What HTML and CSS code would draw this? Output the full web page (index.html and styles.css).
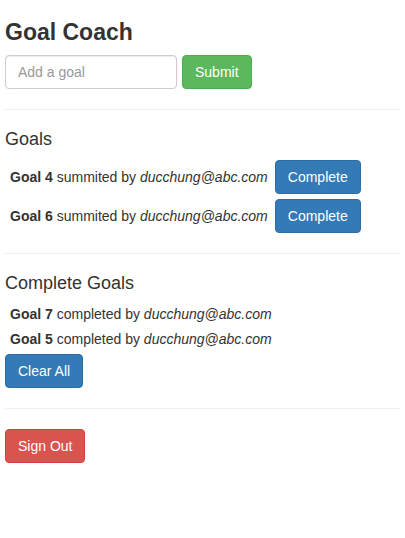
FILE: index.html
```html
<!DOCTYPE html>
<html>
<head>
<meta charset="utf-8">
<title>Goal Coach</title>
<link rel="stylesheet" href="styles.css">
</head>
<body>
<div class="app">
  <h3 class="title">Goal Coach</h3>
  <div class="add-form">
    <input class="form-control" type="text" placeholder="Add a goal">
    <button class="btn btn-success" type="button">Submit</button>
  </div>
  <hr class="divider">
  <h4 class="section-title">Goals</h4>
  <div class="goal-row">
    <span><strong>Goal 4</strong> summited by <em>ducchung@abc.com</em></span>
    <button class="btn btn-primary" type="button">Complete</button>
  </div>
  <div class="goal-row">
    <span><strong>Goal 6</strong> summited by <em>ducchung@abc.com</em></span>
    <button class="btn btn-primary" type="button">Complete</button>
  </div>
  <hr class="divider">
  <h4 class="section-title">Complete Goals</h4>
  <div class="goal-row">
    <span><strong>Goal 7</strong> completed by <em>ducchung@abc.com</em></span>
  </div>
  <div class="goal-row">
    <span><strong>Goal 5</strong> completed by <em>ducchung@abc.com</em></span>
  </div>
  <button class="btn btn-primary" type="button">Clear All</button>
  <hr class="divider">
  <button class="btn btn-danger" type="button">Sign Out</button>
</div>
</body>
</html>
```
FILE: styles.css
```css
html, body {
  margin: 0;
  padding: 0;
  background: #fff;
}
body {
  font-family: "Liberation Sans", Arial, sans-serif;
  font-size: 14px;
  line-height: 1.42857143;
  color: #333;
}
.app {
  margin: 5px;
}
.title {
  font-size: 23px;
  font-weight: bold;
  line-height: 1.1;
  margin: 20px 0 10px 0;
  color: #333;
}
.add-form {
  display: flex;
  gap: 5px;
  align-items: center;
}
.form-control {
  box-sizing: border-box;
  width: 172px;
  height: 34px;
  padding: 6px 12px;
  font-family: inherit;
  font-size: 14px;
  line-height: 1.42857143;
  color: #555;
  background: #fff;
  border: 1px solid #ccc;
  border-radius: 4px;
  box-shadow: inset 0 1px 1px rgba(0,0,0,.075);
  margin: 0;
  outline: none;
}
.form-control::placeholder {
  color: #999;
}
.divider {
  margin: 20px 0;
  border: 0;
  border-top: 1px solid #eee;
  height: 0;
}
.section-title {
  font-size: 18px;
  font-weight: 500;
  line-height: 1.1;
  margin: 10px 0;
}
.goal-row {
  margin: 5px;
  display: flex;
  align-items: center;
  gap: 7px;
}
.btn {
  display: inline-block;
  box-sizing: border-box;
  height: 34px;
  padding: 6px 12px;
  margin: 0;
  font-family: inherit;
  font-size: 14px;
  font-weight: normal;
  line-height: 1.42857143;
  text-align: center;
  white-space: nowrap;
  border: 1px solid transparent;
  border-radius: 4px;
  color: #fff;
  cursor: pointer;
}
.btn-success {
  background-color: #5cb85c;
  border-color: #4cae4c;
}
.btn-primary {
  background-color: #337ab7;
  border-color: #2e6da4;
}
.btn-danger {
  background-color: #d9534f;
  border-color: #d43f3a;
}
```
